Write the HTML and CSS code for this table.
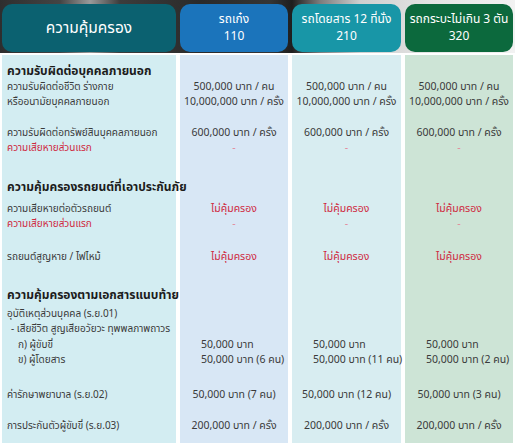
FILE: index.html
```html
<!DOCTYPE html>
<html lang="th">
<head>
<meta charset="utf-8">
<link rel="stylesheet" href="styles.css">
</head>
<body>
<div class="page">
  <div class="top">
    <div class="cols heads">
      <div class="head h1">ความคุ้มครอง</div>
      <div class="head h2"><span>รถเก๋ง</span><span>110</span></div>
      <div class="head h3"><span>รถโดยสาร 12 ที่นั่ง</span><span>210</span></div>
      <div class="head h4"><span>รถกระบะไม่เกิน 3 ตัน</span><span>320</span></div>
    </div>
  </div>
  <div class="body">
    <div class="cols sec s1"><div class="lbl title">ความรับผิดต่อบุคคลภายนอก</div><div></div><div></div><div></div></div>
    <div class="cols row"><div class="lbl">ความรับผิดต่อชีวิต ร่างกาย</div><div class="v">500,000 บาท / คน</div><div class="v">500,000 บาท / คน</div><div class="v">500,000 บาท / คน</div></div>
    <div class="cols row"><div class="lbl">หรืออนามัยบุคคลภายนอก</div><div class="v">10,000,000 บาท / ครั้ง</div><div class="v">10,000,000 บาท / ครั้ง</div><div class="v">10,000,000 บาท / ครั้ง</div></div>
    <div class="cols row gap16"><div class="lbl">ความรับผิดต่อทรัพย์สินบุคคลภายนอก</div><div class="v">600,000 บาท / ครั้ง</div><div class="v">600,000 บาท / ครั้ง</div><div class="v">600,000 บาท / ครั้ง</div></div>
    <div class="cols row"><div class="lbl red">ความเสียหายส่วนแรก</div><div class="v dash">-</div><div class="v dash">-</div><div class="v dash">-</div></div>

    <div class="cols sec s2"><div class="lbl title">ความคุ้มครองรถยนต์ที่เอาประกันภัย</div><div></div><div></div><div></div></div>
    <div class="cols row gap6"><div class="lbl">ความเสียหายต่อตัวรถยนต์</div><div class="v red">ไม่คุ้มครอง</div><div class="v red">ไม่คุ้มครอง</div><div class="v red">ไม่คุ้มครอง</div></div>
    <div class="cols row"><div class="lbl red">ความเสียหายส่วนแรก</div><div class="v dash">-</div><div class="v dash">-</div><div class="v dash">-</div></div>
    <div class="cols row gap18"><div class="lbl">รถยนต์สูญหาย / ไฟไหม้</div><div class="v red">ไม่คุ้มครอง</div><div class="v red">ไม่คุ้มครอง</div><div class="v red">ไม่คุ้มครอง</div></div>

    <div class="cols sec s3"><div class="lbl title">ความคุ้มครองตามเอกสารแนบท้าย</div><div></div><div></div><div></div></div>
    <div class="cols row gap3"><div class="lbl">อุบัติเหตุส่วนบุคคล (ร.ย.01)</div><div></div><div></div><div></div></div>
    <div class="cols row"><div class="lbl ind1">- เสียชีวิต สูญเสียอวัยวะ ทุพพลภาพถาวร</div><div></div><div></div><div></div></div>
    <div class="cols row gap1"><div class="lbl ind2">ก) ผู้ขับขี่</div><div class="v left">50,000 บาท</div><div class="v left">50,000 บาท</div><div class="v left">50,000 บาท</div></div>
    <div class="cols row"><div class="lbl ind2">ข) ผู้โดยสาร</div><div class="v left">50,000 บาท (6 คน)</div><div class="v left">50,000 บาท (11 คน)</div><div class="v left">50,000 บาท (2 คน)</div></div>
    <div class="cols row gap20"><div class="lbl">ค่ารักษาพยาบาล (ร.ย.02)</div><div class="v">50,000 บาท (7 คน)</div><div class="v">50,000 บาท (12 คน)</div><div class="v">50,000 บาท (3 คน)</div></div>
    <div class="cols row gap16"><div class="lbl">การประกันตัวผู้ขับขี่ (ร.ย.03)</div><div class="v">200,000 บาท / ครั้ง</div><div class="v">200,000 บาท / ครั้ง</div><div class="v">200,000 บาท / ครั้ง</div></div>
  </div>
</div>
</body>
</html>
```
FILE: styles.css
```css
* { box-sizing: border-box; }
html, body { margin: 0; padding: 0; background: #ffffff; }
body {
  width: 515px;
  height: 443px;
  overflow: hidden;
  font-family: "Noto Sans Thai", "Tahoma", "DejaVu Sans", "Noto Sans", sans-serif;
  font-size: 10.5px;
  color: #3a3a3a;
}
.page { width: 515px; }
.top {
  padding: 4px 2px 0 2px;
  height: 53px;
  background: linear-gradient(to right, #2e2e2e 0, #444 60px, #9a9a9a 90px, #3c3c3c 120px, #2a2a2a 200px, #353535 270px, #1e1e1e 292px, #7c7c7c 320px, #cfcfcf 360px, #e4e4e4 430px, #f2f2f2 515px);
}
.cols {
  display: grid;
  grid-template-columns: 174px 108px 109px 108px;
  column-gap: 4px;
}
.heads { height: 48px; }
.head {
  border-radius: 10px;
  color: #fff;
  display: flex;
  flex-direction: column;
  align-items: center;
  justify-content: center;
  text-align: center;
  font-size: 12px;
  line-height: 17px;
  white-space: nowrap;
}
.h1 { background: #0b6170; font-size: 15.5px; }
.h2 { background: #1b74bb; }
.h3 { background: #1896a7; }
.h4 { background: #0c693d; }

.body {
  margin: 2px 2px 0 2px;
  padding-top: 7px;
  height: 388px;
  background: linear-gradient(to right,
    #d3edf2 0, #d3edf2 174px,
    #ffffff 174px, #ffffff 178px,
    #d8e7f5 178px, #d8e7f5 286px,
    #ffffff 286px, #ffffff 290px,
    #d8edf1 290px, #d8edf1 399px,
    #ffffff 399px, #ffffff 403px,
    #cde4d6 403px, #cde4d6 511px);
}
.row { height: 15px; line-height: 15px; }
.sec { height: 18px; line-height: 18px; }
.s2 { margin-top: 22px; }
.s3 { margin-top: 21px; }
.gap1 { margin-top: 1px; }
.gap3 { margin-top: 3px; }
.gap6 { margin-top: 6px; }
.gap16 { margin-top: 16px; }
.gap18 { margin-top: 18px; }
.gap20 { margin-top: 20px; }
.lbl { padding-left: 5px; white-space: nowrap; font-size: 10px; }
.title { font-weight: bold; font-size: 12px; color: #1c1c1c; }
.ind1 { padding-left: 9px; }
.ind2 { padding-left: 16px; }
.v { text-align: center; white-space: nowrap; }
.v.left { text-align: left; padding-left: 21px; }
.red { color: #cf2a3f; }
.dash { color: #e3899a; }
```
